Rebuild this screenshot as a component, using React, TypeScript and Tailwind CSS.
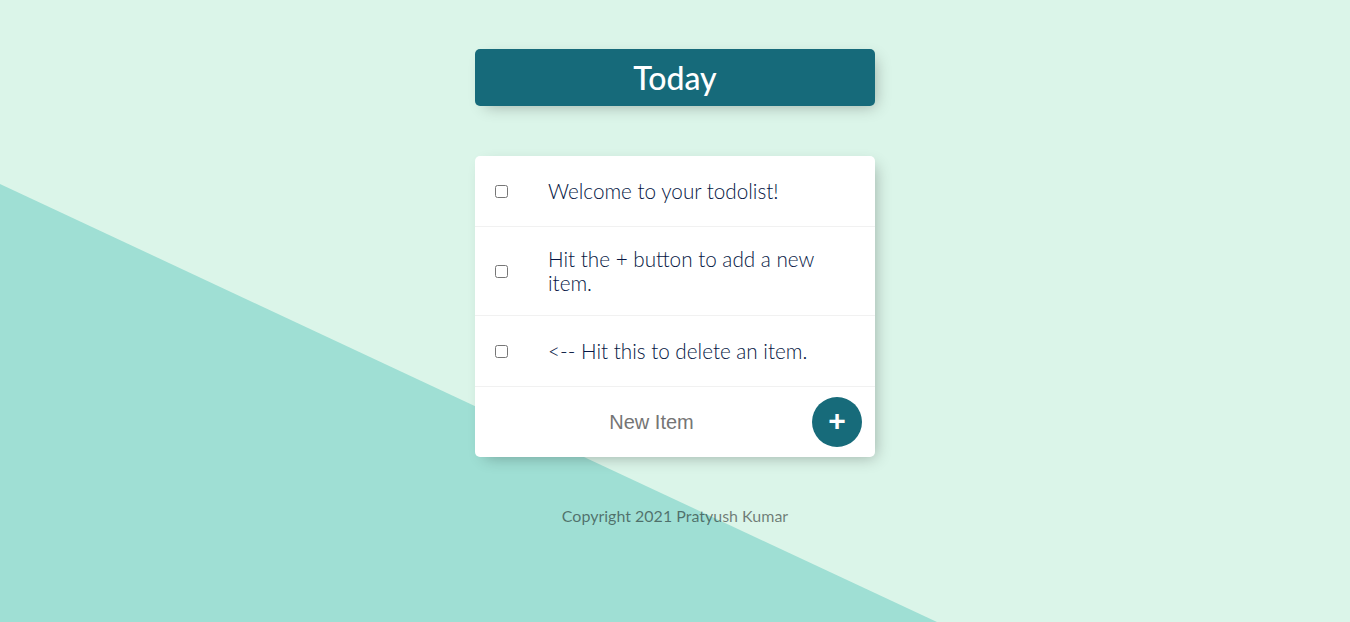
const items = [
  'Welcome to your todolist!',
  'Hit the + button to add a new item.',
  '<-- Hit this to delete an item.',
]

export default function App() {
  return (
    <div className="relative min-h-[622px] overflow-hidden bg-[#dbf5e9] font-['Lato','Noto_Sans',sans-serif]">
      {/* diagonal background shape */}
      <div className="absolute inset-0 bg-[#9fdfd4] [clip-path:polygon(0_184px,937px_100%,0_100%)]" />

      <div className="relative pt-[49px]">
        {/* Heading */}
        <div className="mx-auto w-[400px] rounded-[5px] bg-[#166a7a] shadow-[5px_5px_15px_-5px_rgba(0,0,0,0.3)]">
          <h1 className="py-[10px] text-center text-[32px] leading-[37px] font-medium text-white">
            Today
          </h1>
        </div>

        {/* List */}
        <div className="mx-auto mt-[50px] w-[400px] rounded-[5px] bg-white shadow-[5px_5px_15px_-5px_rgba(0,0,0,0.3)]">
          {items.map((text) => (
            <div key={text} className="flex min-h-[71px] items-center border-b border-[#f1f1f1]">
              <input type="checkbox" className="m-[20px] h-[13px] w-[13px] shrink-0" />
              <p className="py-[20px] pl-[20px] pr-[20px] text-[20.7px] leading-[24px] font-light text-[#061744]">
                {text}
              </p>
            </div>
          ))}
          <div className="flex min-h-[70px] items-center">
            <form className="ml-[20px] flex items-center" onSubmit={(e) => e.preventDefault()}>
              <input
                type="text"
                placeholder="New Item"
                className="h-[60px] w-[313px] bg-transparent text-center font-['Liberation_Sans',Arial,sans-serif] text-[20px] placeholder:text-[#757575] focus:outline-none"
              />
              <button
                type="submit"
                className="ml-[4px] flex h-[50px] w-[50px] items-center justify-center rounded-full bg-[#176b7a] pb-[4px] font-['Liberation_Sans',Arial,sans-serif] text-[30px] font-bold text-white"
              >
                +
              </button>
            </form>
          </div>
        </div>

        {/* Footer */}
        <footer className="mt-[49px] text-center text-[16px] leading-[20px] text-black/50">
          Copyright 2021 Pratyush Kumar
        </footer>
      </div>
    </div>
  )
}
